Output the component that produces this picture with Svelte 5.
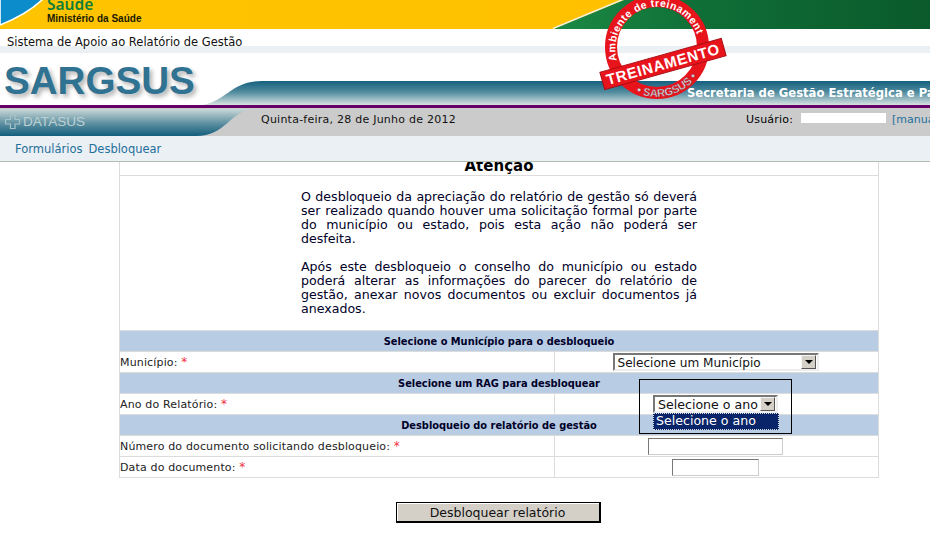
<script>
  const verdana = 'DejaVu Sans'

  const rows = [
    { section: 'Selecione o Município para o desbloqueio' },
    { label: 'Município:', field: 'municipio' },
    { section: 'Selecione um RAG para desbloquear' },
    { label: 'Ano do Relatório:', field: 'ano' },
    { section: 'Desbloqueio do relatório de gestão' },
    { label: 'Número do documento solicitando desbloqueio:', field: 'numero' },
    { label: 'Data do documento:', field: 'data' }
  ]
</script>

<div class="page" style:font-family={`"${verdana}", sans-serif`}>
  <div class="gov">
    <svg class="gov-bg" width="930" height="29" viewBox="0 0 930 29" aria-hidden="true">
      <defs>
        <linearGradient id="yellow" x1="0" x2="1" y1="0" y2="0">
          <stop offset="0" stop-color="#ffc400" />
          <stop offset="0.75" stop-color="#ffc000" />
          <stop offset="1" stop-color="#f9a90c" />
        </linearGradient>
        <linearGradient id="green" x1="0" x2="1" y1="0" y2="0">
          <stop offset="0" stop-color="#1b8a45" />
          <stop offset="0.4" stop-color="#0f6e36" />
          <stop offset="1" stop-color="#0b5a2b" />
        </linearGradient>
      </defs>
      <rect width="930" height="29" fill="url(#yellow)" />
      <polygon points="553,29 624,0 930,0 930,29" fill="url(#green)" />
      <line x1="553" y1="28.5" x2="624" y2="-1" stroke="#f4efd8" stroke-width="1.5" />
      <path d="M0 25 C18 18 34 8 44 -2 L0 -2 Z" fill="#0d8ccb" stroke="#fff" stroke-width="1.6" />
    </svg>
    <span class="saude">Saúde</span>
    <span class="ministerio">Ministério da Saúde</span>
  </div>

  <div class="system">Sistema de Apoio ao Relatório de Gestão</div>

  <div class="brand">
    <svg class="swoosh" width="930" height="52" viewBox="0 0 930 52" aria-hidden="true">
      <defs>
        <linearGradient id="teal" x1="0" x2="0" y1="0" y2="1">
          <stop offset="0" stop-color="#14607f" />
          <stop offset="0.45" stop-color="#4f8a9d" />
          <stop offset="1" stop-color="#d6e1e2" />
        </linearGradient>
      </defs>
      <path d="M203 52 C226 48 232 28 262 28 L930 28 L930 52 Z" fill="url(#teal)" />
    </svg>
    <span class="sargsus">SARGSUS</span>
    <span class="secretaria">Secretaria de Gestão Estratégica e Participativa</span>
  </div>

  <div class="status">
    <svg class="datasus-bg" width="255" height="27" viewBox="0 0 255 27" aria-hidden="true">
      <defs>
        <linearGradient id="teal2" x1="0" x2="0" y1="0" y2="1">
          <stop offset="0" stop-color="#c9d8d8" />
          <stop offset="0.55" stop-color="#5b8e9f" />
          <stop offset="1" stop-color="#125e7d" />
        </linearGradient>
      </defs>
      <path d="M0 0 L252 0 C228 4 226 27 196 27 L0 27 Z" fill="url(#teal2)" />
      <path d="M10.5 6 h4.5 v4.5 h4.5 v4.5 h-4.5 v4.5 h-4.5 v-4.5 h-5 v-4.5 h5 z" fill="none" stroke="#a9c3ca" stroke-width="1.2" />
    </svg>
    <span class="datasus">DATASUS</span>
    <span class="date">Quinta-feira, 28 de Junho de 2012</span>
    <span class="user">Usuário:</span>
    <span class="user-name"></span>
    <span class="manual">[manual]</span>
  </div>

  <nav class="menu">
    <a href="#formularios">Formulários</a>
    <a href="#desbloquear">Desbloquear</a>
  </nav>

  <table>
    <colgroup><col class="col-label" /><col /></colgroup>
    <tbody>
      <tr class="title-row"><td colspan="2"><h1>Atenção</h1></td></tr>
      <tr>
        <td colspan="2" class="message">
          <p>O desbloqueio da apreciação do relatório de gestão só deverá ser realizado quando houver uma solicitação formal por parte do município ou estado, pois esta ação não poderá ser desfeita.</p>
          <p>Após este desbloqueio o conselho do município ou estado poderá alterar as informações do parecer do relatório de gestão, anexar novos documentos ou excluir documentos já anexados.</p>
        </td>
      </tr>
      {#each rows as row}
        {#if row.section}
          <tr class="section"><td colspan="2">{row.section}</td></tr>
        {:else}
          <tr class="field">
            <td class="label">{row.label} <span class="req">*</span></td>
            <td class="control">
              {#if row.field === 'municipio'}
                <div class="select wide"><span>Selecione um Município</span><i class="arrow"></i></div>
              {:else if row.field === 'ano'}
                <div class="select year"><span>Selecione o ano</span><i class="arrow"></i></div>
              {:else if row.field === 'numero'}
                <input class="numero" type="text" />
              {:else}
                <input class="data" type="text" />
              {/if}
            </td>
          </tr>
        {/if}
      {/each}
    </tbody>
  </table>

  <div class="actions">
    <button type="button">Desbloquear relatório</button>
  </div>

  <div class="popup">
    <div class="option">Selecione o ano</div>
  </div>

  <svg class="stamp" width="150" height="110" viewBox="0 0 150 110" aria-hidden="true">
    <defs>
      <path id="ring-top" d="M27 60.3 A42 42 0 1 1 108 37.2" />
      <path id="ring-bottom" d="M46 92.4 A50 50 0 0 0 110 72" />
    </defs>
    <circle cx="67" cy="47" r="46" fill="none" stroke="#e8141c" stroke-width="12" />
    <text class="ring-text"><textPath href="#ring-top" textLength="136">Ambiente de treinamento</textPath></text>
    <text class="ring-low"><textPath href="#ring-bottom">• SARGSUS •</textPath></text>
    <g transform="rotate(-15.6 73 64)">
      <rect x="10" y="55" width="126" height="18" fill="#e8141c" stroke="#a80c12" stroke-width="1" />
      <text class="band-text" x="73" y="69.5" text-anchor="middle">TREINAMENTO</text>
    </g>
  </svg>
</div>

<style>
  :global(body) {
    margin: 0;
    background: #fff;
    overflow: hidden;
  }

  .page {
    position: relative;
    width: 930px;
    height: 546px;
    overflow: hidden;
    color: #000;
    font-size: 11px;
  }

  .gov {
    position: relative;
    height: 29px;
    overflow: hidden;
  }

  .gov-bg,
  .swoosh {
    position: absolute;
    left: 0;
    top: 0;
  }

  .datasus-bg {
    position: absolute;
    left: 0;
    top: 1px;
  }

  .saude {
    position: absolute;
    left: 47px;
    top: -7px;
    font-family: 'Noto Sans', sans-serif;
    font-size: 15.5px;
    font-weight: 600;
    line-height: 22px;
    color: #0f7d3a;
  }

  .ministerio {
    position: absolute;
    left: 47px;
    top: 13px;
    font-family: 'Liberation Sans', sans-serif;
    font-size: 10px;
    font-weight: bold;
    line-height: 12px;
    color: #1a1a00;
  }

  .system {
    height: 17px;
    padding: 7px 0 0 7px;
    box-sizing: border-box;
    line-height: 13px;
    font-size: 11.5px;
    white-space: nowrap;
    color: #111;
    margin-bottom: 7px;
    box-shadow: 0 7px 0 #ebf0f5;
  }

  .brand {
    position: relative;
    height: 52px;
    background: #fff;
    border-bottom: 3px solid #660066;
  }

  .sargsus {
    position: absolute;
    left: 4px;
    top: 5px;
    font-family: 'Liberation Sans', sans-serif;
    font-weight: bold;
    font-size: 38.6px;
    line-height: 46px;
    color: #2f7292;
    text-shadow: 3px 3px 4px #b4b4b4;
  }

  .secretaria {
    position: absolute;
    left: 687px;
    top: 33px;
    font-size: 11.6px;
    font-weight: bold;
    line-height: 15px;
    color: #fff;
    white-space: nowrap;
  }

  .status {
    position: relative;
    height: 28px;
    background: #cbcbcb;
    font-size: 11px;
    line-height: 14px;
    white-space: nowrap;
  }

  .datasus {
    position: absolute;
    left: 23px;
    top: 6px;
    font-family: 'Liberation Sans', sans-serif;
    font-size: 13.6px;
    line-height: 16px;
    color: #bcd0d5;
  }

  .date {
    position: absolute;
    left: 261px;
    top: 5px;
    letter-spacing: 0.24px;
    color: #111;
  }

  .user {
    position: absolute;
    left: 746px;
    top: 5px;
    letter-spacing: 0.2px;
  }

  .user-name {
    position: absolute;
    left: 801px;
    top: 5px;
    width: 85px;
    height: 10px;
    background: #fff;
  }

  .manual {
    position: absolute;
    left: 892px;
    top: 5px;
    color: #1f6f9a;
  }

  .menu {
    display: flex;
    gap: 6px;
    height: 26px;
    padding: 6px 0 0 15px;
    box-sizing: border-box;
    background: #ebf0f5;
    border-bottom: 1px solid #b4bdb0;
    line-height: 14px;
  }

  .menu a {
    color: #1f6f9a;
    text-decoration: none;
    font-size: 11.5px;
  }

  table {
    width: 760px;
    margin: 0 0 0 119px;
    border-collapse: collapse;
    table-layout: fixed;
    font-size: 11px;
  }

  .col-label {
    width: 435px;
  }

  td {
    border: 1px solid #dcdcdc;
    padding: 0;
  }

  .title-row td {
    height: 13px;
    border-top: 0;
    overflow: hidden;
  }

  h1 {
    margin: -5px 0 -1px;
    height: 19px;
    text-align: center;
    font-size: 15px;
    line-height: 18px;
    color: #000;
  }

  .message {
    height: 155px;
    padding: 14px 181px 0 181px;
    box-sizing: border-box;
    vertical-align: top;
  }

  .message p {
    margin: 0 0 14px;
    font-size: 12.6px;
    line-height: 14px;
    text-align: justify;
    color: #000028;
  }

  .message p:last-child {
    margin: 0;
  }

  .section td {
    height: 20px;
    background: #b8cce4;
    text-align: center;
    font-size: 9.85px;
    font-weight: bold;
    color: #000028;
  }

  .field td {
    height: 20px;
    color: #222;
  }

  .label {
    letter-spacing: 0.15px;
  }

  .req {
    color: #f03040;
    font-size: 12px;
  }

  .field .control {
    padding-right: 2px;
    text-align: center;
    line-height: 0;
  }

  .select {
    display: inline-flex;
    align-items: center;
    justify-content: space-between;
    box-sizing: border-box;
    height: 18px;
    padding: 0 1px 0 3px;
    background: #fff;
    border: 2px solid;
    border-color: #777 #eee #eee #777;
    line-height: 14px;
    color: #111;
    vertical-align: middle;
  }

  .select span {
    padding-top: 2px;
  }

  .wide {
    width: 206px;
    font-size: 12.1px;
  }

  .year {
    width: 125px;
    font-size: 12.6px;
    white-space: nowrap;
  }

  .arrow {
    position: relative;
    flex: none;
    width: 15px;
    height: 14px;
    box-sizing: border-box;
    background: #d4d0c8;
    border: 1px solid;
    border-color: #f5f5f5 #555 #555 #f5f5f5;
  }

  .arrow::after {
    content: '';
    position: absolute;
    left: 3px;
    top: 4px;
    border: 4px solid transparent;
    border-top: 4px solid #000;
    border-bottom: 0;
  }

  input {
    box-sizing: border-box;
    height: 17px;
    padding: 0;
    background: #fff;
    border: 1px solid;
    border-color: #777 #ccc #ccc #777;
    vertical-align: middle;
  }

  .numero {
    width: 135px;
  }

  .data {
    width: 87px;
  }

  .actions {
    display: flex;
    justify-content: center;
    width: 760px;
    margin: 24px 0 0 118px;
  }

  button {
    width: 205px;
    height: 21px;
    padding: 0;
    background: #d4d0c8;
    border: 1px solid #000;
    border-bottom-width: 2px;
    border-right-width: 2px;
    box-shadow: inset 1px 1px 0 #fff;
    font-family: inherit;
    font-size: 12.5px;
    color: #111;
  }

  .popup {
    position: absolute;
    left: 639px;
    top: 379px;
    width: 153px;
    height: 55px;
    box-sizing: border-box;
    border: 1px solid #000;
  }

  .option {
    position: absolute;
    left: 13px;
    top: 33px;
    width: 126px;
    height: 17px;
    box-sizing: border-box;
    padding-left: 2px;
    background: #0a246a;
    border: 1px dotted #ddd;
    color: #fff;
    font-size: 12.6px;
    line-height: 14px;
    white-space: nowrap;
  }

  .stamp {
    position: absolute;
    left: 590px;
    top: 0;
  }

  .ring-text {
    font-family: 'Liberation Sans', sans-serif;
    font-size: 10.5px;
    font-weight: bold;
    fill: #fff;
  }

  .ring-low {
    font-family: 'Liberation Sans', sans-serif;
    font-size: 11px;
    font-weight: bold;
    fill: #d9dde0;
    stroke: #8a2a3a;
    stroke-width: 0.4px;
  }

  .band-text {
    font-family: 'Liberation Sans', sans-serif;
    font-size: 15px;
    font-weight: bold;
    letter-spacing: 0.7px;
    fill: #fff;
  }
</style>
